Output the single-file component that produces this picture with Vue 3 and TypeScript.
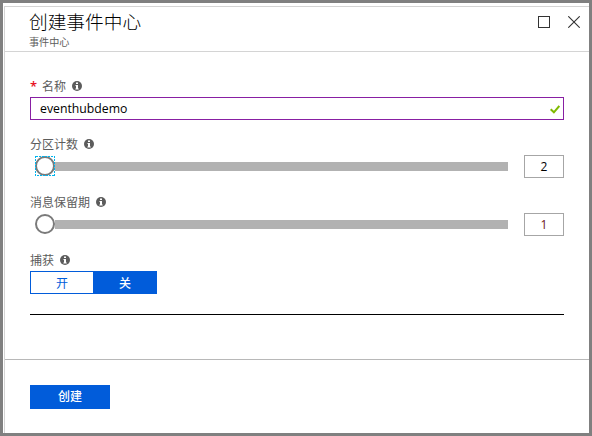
<script setup lang="ts">
import { ref } from 'vue'

interface Slider {
  label: string
  value: number
  focused: boolean
  warn: boolean
}

const name = ref('eventhubdemo')
const sliders = ref<Slider[]>([
  { label: '分区计数', value: 2, focused: true, warn: false },
  { label: '消息保留期', value: 1, focused: false, warn: true },
])
const capture = ref(false)
</script>

<template>
  <div class="frame">
    <section class="blade">
      <header class="header">
        <div class="titles">
          <h1 class="title">创建事件中心</h1>
          <p class="subtitle">事件中心</p>
        </div>
        <div class="controls">
          <svg class="control" width="12" height="12" viewBox="0 0 12 12">
            <rect x="0.5" y="0.5" width="11" height="11" fill="none" stroke="#333" />
          </svg>
          <svg class="control" width="12" height="12" viewBox="0 0 12 12">
            <path d="M0.3 0.3 11.7 11.7M11.7 0.3 0.3 11.7" fill="none" stroke="#333" stroke-width="1.1" />
          </svg>
        </div>
      </header>

      <main class="content">
        <div class="field">
          <div class="label">
            <span class="required">*</span>
            <span class="caption">名称</span>
            <svg class="info" width="10" height="10" viewBox="0 0 10 10">
              <circle cx="5" cy="5" r="5" fill="#5c5c5c" />
              <path d="M4 1.4h2v1.5H4zM3.5 4H6v3.6h.7v1H3.4v-1H4V5h-.5z" fill="#fff" />
            </svg>
          </div>
          <div class="textbox">
            <span class="text">{{ name }}</span>
            <svg class="check" width="10" height="9" viewBox="0 0 10 9">
              <path d="M0.7 4.2 3.9 7.3 9.3 1" fill="none" stroke="#7fba00" stroke-width="2" />
            </svg>
          </div>
        </div>

        <div v-for="s in sliders" :key="s.label" class="field">
          <div class="label">
            <span class="caption">{{ s.label }}</span>
            <svg class="info" width="10" height="10" viewBox="0 0 10 10">
              <circle cx="5" cy="5" r="5" fill="#5c5c5c" />
              <path d="M4 1.4h2v1.5H4zM3.5 4H6v3.6h.7v1H3.4v-1H4V5h-.5z" fill="#fff" />
            </svg>
          </div>
          <div class="slider-row">
            <div class="slider">
              <svg class="thumb" width="20" height="20" viewBox="0 0 20 20">
                <circle cx="10" cy="10" r="9" fill="#fff" stroke="#7a7a7a" stroke-width="2" />
                <rect v-if="s.focused" x="0.5" y="0.5" width="19" height="19" fill="none" stroke="#00b4ee" stroke-dasharray="2 1" shape-rendering="crispEdges" />
              </svg>
              <div class="track"></div>
            </div>
            <div class="number" :class="{ warn: s.warn }">{{ s.value }}</div>
          </div>
        </div>

        <div class="field">
          <div class="label">
            <span class="caption">捕获</span>
            <svg class="info" width="10" height="10" viewBox="0 0 10 10">
              <circle cx="5" cy="5" r="5" fill="#5c5c5c" />
              <path d="M4 1.4h2v1.5H4zM3.5 4H6v3.6h.7v1H3.4v-1H4V5h-.5z" fill="#fff" />
            </svg>
          </div>
          <div class="toggle">
            <button class="option" :class="{ active: capture }" @click="capture = true">开</button>
            <button class="option" :class="{ active: !capture }" @click="capture = false">关</button>
          </div>
        </div>

        <div class="divider"></div>
      </main>

      <footer class="footer">
        <button class="create">创建</button>
      </footer>
    </section>
  </div>
</template>

<style>
body {
  margin: 0;
  background: #fff;
}
</style>

<style scoped>
.frame {
  box-sizing: border-box;
  width: 592px;
  height: 436px;
  border: 3px solid #808080;
  padding: 3px 0 0 1px;
  display: flex;
  background: #fff;
  font-family: 'Open Sans', 'Noto Sans CJK SC', sans-serif;
  font-size: 12px;
  color: #000;
}
.blade {
  flex: 1;
  display: flex;
  flex-direction: column;
  border-top: 1px solid #d4d4d4;
  border-left: 1px solid #d4d4d4;
}
.header {
  box-sizing: border-box;
  height: 45px;
  display: flex;
  justify-content: space-between;
  padding: 0 9px 0 24px;
  border-bottom: 1px solid #d4d4d4;
}
.title {
  margin: 3px 0 0;
  font-family: 'Noto Sans CJK SC', sans-serif;
  font-size: 18.7px;
  font-weight: 300;
  line-height: 22px;
}
.subtitle {
  margin: 3px 0 0;
  font-size: 10.1px;
  line-height: 14px;
  color: #5c5c5c;
}
.controls {
  display: flex;
  gap: 18px;
  padding-top: 9px;
}
.control {
  display: block;
}
.content {
  display: flex;
  flex-direction: column;
  gap: 12px;
  padding: 22px 25px 44px;
}
.label {
  height: 23px;
  display: flex;
  align-items: center;
  color: #5c5c5c;
}
.caption {
  padding-top: 2px;
  line-height: 21px;
}
.required {
  width: 12px;
  line-height: 22px;
  color: #e81123;
  font-size: 13px;
  font-weight: 600;
}
.info {
  margin-left: 6px;
}
.textbox {
  box-sizing: border-box;
  height: 23px;
  display: flex;
  align-items: center;
  justify-content: space-between;
  padding: 0 3px 0 9px;
  border: 1px solid #881fa3;
}
.text {
  font-size: 12.25px;
  line-height: 20px;
}
.check {
  margin-top: 1px;
}
.slider-row {
  height: 23px;
  display: flex;
  justify-content: space-between;
}
.slider {
  width: 473px;
  height: 22px;
  padding-left: 5px;
  display: flex;
  align-items: center;
}
.track {
  flex: 1;
  height: 9px;
  margin-top: 1px;
  background: #b2b2b2;
}
.number {
  box-sizing: border-box;
  width: 40px;
  height: 23px;
  border: 1px solid #a6a6a6;
  text-align: center;
  line-height: 21px;
}
.number.warn {
  color: #6b1420;
}
.toggle {
  box-sizing: border-box;
  width: 127px;
  height: 23px;
  display: grid;
  grid-template-columns: 62px 1fr;
  border: 1px solid #015cda;
}
.option {
  padding: 2px 0 0;
  border: 0;
  background: #fff;
  color: #015cda;
  font: inherit;
  line-height: 19px;
}
.option.active {
  padding-left: 1px;
  background: #015cda;
  color: #fff;
  font-weight: 500;
}
.divider {
  height: 1px;
  margin-top: 8px;
  background: #000;
}
.footer {
  flex: 1;
  padding: 25px 25px 0;
  border-top: 1px solid #b8b8b8;
}
.create {
  display: block;
  width: 80px;
  height: 24px;
  padding: 0;
  border: 0;
  background: #015cda;
  color: #fff;
  font: inherit;
  font-weight: 500;
  line-height: 24px;
}
</style>
